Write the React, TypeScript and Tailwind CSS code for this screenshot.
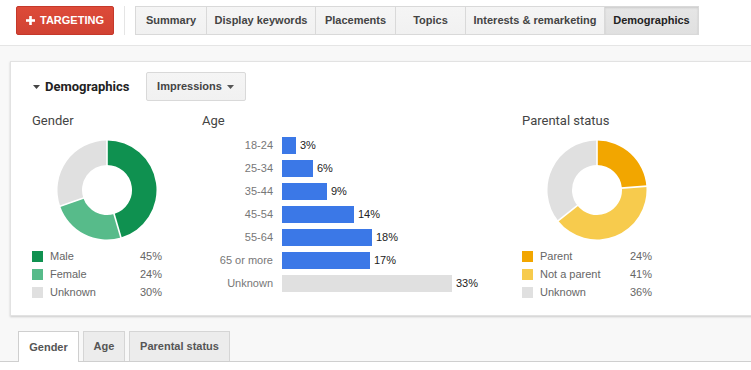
import React from "react";

type Seg = { v: number; c: string };

function Donut({ data }: { data: Seg[] }) {
  const total = data.reduce((s, d) => s + d.v, 0);
  const R = 49.5;
  const r = 25;
  const cx = 50;
  const cy = 50;
  let a0 = 0;
  const pt = (ang: number, rad: number) => [cx + rad * Math.sin(ang), cy - rad * Math.cos(ang)];
  const paths = data.map((d, i) => {
    const a1 = a0 + (d.v / total) * Math.PI * 2;
    const large = a1 - a0 > Math.PI ? 1 : 0;
    const [x1, y1] = pt(a0, R);
    const [x2, y2] = pt(a1, R);
    const [x3, y3] = pt(a1, r);
    const [x4, y4] = pt(a0, r);
    const dp = `M${x1} ${y1} A${R} ${R} 0 ${large} 1 ${x2} ${y2} L${x3} ${y3} A${r} ${r} 0 ${large} 0 ${x4} ${y4} Z`;
    a0 = a1;
    return <path key={i} d={dp} fill={d.c} />;
  });
  let b = 0;
  const lines = data.map((d, i) => {
    const [xa, ya] = pt(b, r - 1);
    const [xb, yb] = pt(b, R + 1);
    b += (d.v / total) * Math.PI * 2;
    return <line key={"l" + i} x1={xa} y1={ya} x2={xb} y2={yb} stroke="#fff" strokeWidth={1.6} />;
  });
  return (
    <svg width={100} height={100} viewBox="0 0 100 100">
      {paths}
      {lines}
    </svg>
  );
}

function Legend({ items }: { items: { label: string; pct: string; c: string }[] }) {
  return (
    <div className="mt-[7px] flex flex-col">
      {items.map((it) => (
        <div key={it.label} className="flex h-[18px] items-center text-[11px] text-[#666]">
          <div className="mr-[7px] h-[11px] w-[11px]" style={{ backgroundColor: it.c }} />
          <div className="w-[90px]">{it.label}</div>
          <div>{it.pct}</div>
        </div>
      ))}
    </div>
  );
}

const tabs = [
  { t: "Summary", w: "w-[71px]" },
  { t: "Display keywords", w: "w-[109px]" },
  { t: "Placements", w: "w-[80px]" },
  { t: "Topics", w: "w-[70px]" },
  { t: "Interests & remarketing", w: "w-[139px]" },
  { t: "Demographics", w: "w-[94px]", sel: true },
];

const ages = [
  { l: "18-24", w: 14, p: "3%" },
  { l: "25-34", w: 31, p: "6%" },
  { l: "35-44", w: 45, p: "9%" },
  { l: "45-54", w: 72, p: "14%" },
  { l: "55-64", w: 90, p: "18%" },
  { l: "65 or more", w: 88, p: "17%" },
  { l: "Unknown", w: 170, p: "33%", u: true },
];

export default function App() {
  return (
    <div className="h-[370px] w-[751px] overflow-hidden bg-white font-['Liberation_Sans',Arial,sans-serif]">
      {/* top bar */}
      <div className="flex h-[46px] items-start border-b border-[#e5e5e5] bg-white pl-4 pt-[6px]">
        <div className="flex h-[29px] w-[98px] items-center justify-center gap-[5px] rounded-[2px] border border-[#c5382a] bg-gradient-to-b from-[#dd4b39] to-[#d14233] text-[11px] font-bold text-white">
          <svg width="9" height="9" viewBox="0 0 9 9">
            <rect x="3.2" y="0" width="2.6" height="9" fill="#fff" />
            <rect x="0" y="3.2" width="9" height="2.6" fill="#fff" />
          </svg>
          <span>TARGETING</span>
        </div>
        <div className="mx-[10px] h-[29px] w-px bg-[#e5e5e5]" />
        <div className="flex h-[29px] border-y border-r border-[#d9d9d9]">
          {tabs.map((t) => (
            <div
              key={t.t}
              className={`${t.w} flex items-center justify-center border-l border-[#d9d9d9] text-[11px] font-bold ${
                t.sel
                  ? "bg-gradient-to-b from-[#e6e6e6] to-[#e0e0e0] text-[#222] shadow-[inset_0_1px_2px_rgba(0,0,0,0.12)]"
                  : "bg-gradient-to-b from-[#f5f5f5] to-[#f1f1f1] text-[#444]"
              }`}
            >
              {t.t}
            </div>
          ))}
        </div>
      </div>

      {/* gray area */}
      <div className="bg-[#f8f8f8] pt-[15px]">
        <div className="ml-[10px] w-[760px] border border-[#e2e2e2] bg-white pb-[14px] pl-[21px] pt-[10px] shadow-[0_1px_2px_rgba(0,0,0,0.18)]">
          <div className="flex h-[29px] items-center">
            <svg width="7" height="4" viewBox="0 0 7 4" className="ml-[1px] mr-[5px]">
              <path d="M0 0 L7 0 L3.5 4 Z" fill="#444" />
            </svg>
            <span className="font-['Roboto',sans-serif] text-[13px] font-bold text-[#222]">Demographics</span>
            <div className="ml-[16px] flex h-[29px] w-[100px] items-center justify-center gap-[5px] rounded-[2px] border border-[#d9d9d9] bg-gradient-to-b from-[#f5f5f5] to-[#f1f1f1] text-[11px] font-bold text-[#444]">
              <span>Impressions</span>
              <svg width="7" height="4" viewBox="0 0 7 4">
                <path d="M0 0 L7 0 L3.5 4 Z" fill="#555" />
              </svg>
            </div>
          </div>

          <div className="mt-[12px] flex">
            {/* Gender */}
            <div className="w-[150px]">
              <div className="h-[16px] font-['Roboto',sans-serif] text-[13px] leading-[16px] text-[#444]">Gender</div>
              <div className="mt-[11px] flex justify-center">
                <Donut
                  data={[
                    { v: 45, c: "#0f9150" },
                    { v: 24, c: "#57bb8a" },
                    { v: 30, c: "#e0e0e0" },
                  ]}
                />
              </div>
              <Legend
                items={[
                  { label: "Male", pct: "45%", c: "#0f9150" },
                  { label: "Female", pct: "24%", c: "#57bb8a" },
                  { label: "Unknown", pct: "30%", c: "#e0e0e0" },
                ]}
              />
            </div>

            {/* Age */}
            <div className="ml-[20px] w-[320px]">
              <div className="h-[16px] font-['Roboto',sans-serif] text-[13px] leading-[16px] text-[#444]">Age</div>
              <div className="mt-[8px] flex flex-col gap-[6px]">
                {ages.map((a) => (
                  <div key={a.l} className="flex h-[17px] items-center text-[11px]">
                    <div className="w-[71px] text-right text-[#777]">{a.l}</div>
                    <div
                      className={`ml-[9px] h-[17px] ${a.u ? "bg-[#e0e0e0]" : "bg-[#3b78e7]"}`}
                      style={{ width: a.w }}
                    />
                    <div className="ml-[4px] text-[#222]">{a.p}</div>
                  </div>
                ))}
              </div>
            </div>

            {/* Parental */}
            <div className="w-[150px]">
              <div className="h-[16px] font-['Roboto',sans-serif] text-[13px] leading-[16px] text-[#444]">Parental status</div>
              <div className="mt-[11px] flex justify-center">
                <Donut
                  data={[
                    { v: 24, c: "#f2a600" },
                    { v: 41, c: "#f7cb4d" },
                    { v: 36, c: "#e0e0e0" },
                  ]}
                />
              </div>
              <Legend
                items={[
                  { label: "Parent", pct: "24%", c: "#f2a600" },
                  { label: "Not a parent", pct: "41%", c: "#f7cb4d" },
                  { label: "Unknown", pct: "36%", c: "#e0e0e0" },
                ]}
              />
            </div>
          </div>
        </div>

        {/* bottom tabs */}
        <div className="mt-[15px] flex items-end gap-[4px] border-b border-[#cfcfcf] pl-[18px]">
          <div className="-mb-px flex h-[31px] w-[61px] items-center justify-center border border-b-0 border-[#cfcfcf] bg-white text-[11px] font-bold text-[#555]">
            Gender
          </div>
          <div className="flex h-[30px] w-[42px] items-center justify-center border border-b-0 border-[#d5d5d5] bg-[#ececec] text-[11px] font-bold text-[#555]">
            Age
          </div>
          <div className="flex h-[30px] w-[101px] items-center justify-center border border-b-0 border-[#d5d5d5] bg-[#ececec] text-[11px] font-bold text-[#555]">
            Parental status
          </div>
        </div>
      </div>
      <div className="h-[10px] bg-white" />
    </div>
  );
}
